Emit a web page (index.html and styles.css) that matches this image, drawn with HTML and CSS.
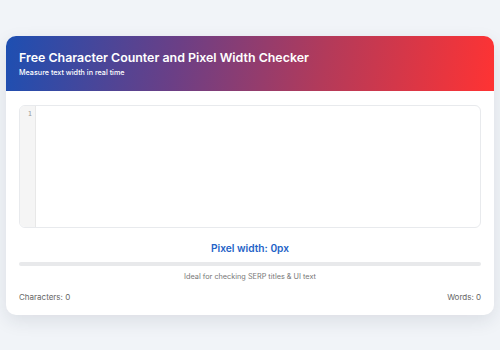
FILE: index.html
```html
<!DOCTYPE html>
<html>
<head>
<meta charset="utf-8">
<link rel="stylesheet" href="styles.css">
</head>
<body>
<div class="card">
  <div class="header">
    <h1 class="title">Free Character Counter and Pixel Width Checker</h1>
    <p class="subtitle">Measure text width in real time</p>
  </div>
  <div class="content">
    <div class="editor">
      <div class="gutter">1</div>
      <div class="textarea"></div>
    </div>
    <div class="pixel">Pixel width: 0px</div>
    <div class="bar"><div class="fill"></div></div>
    <div class="hint">Ideal for checking SERP titles &amp; UI text</div>
    <div class="stats">
      <span>Characters: 0</span>
      <span>Words: 0</span>
    </div>
  </div>
</div>
</body>
</html>
```

FILE: styles.css
```css
html, body {
  margin: 0;
  padding: 0;
}
body {
  background: #f1f4f8;
  font-family: Inter, "Noto Sans", sans-serif;
  padding: 36px 6px 0;
  height: 350px;
  box-sizing: border-box;
}
.card {
  background: #fff;
  border-radius: 10px;
  box-shadow: 0 6px 18px rgba(30, 40, 60, 0.10);
  overflow: hidden;
}
.header {
  height: 55px;
  box-sizing: border-box;
  padding: 13px 13px 0;
  background: linear-gradient(100deg, #1d4fb2 0%, #6b3f86 35%, #b33a5a 65%, #ff3333 100%);
  color: #fff;
}
.title {
  margin: 0;
  font-size: 12.4px;
  font-weight: 600;
  line-height: 17px;
}
.subtitle {
  margin: 2px 0 0;
  font-size: 7.2px;
  font-weight: 500;
  line-height: 10px;
}
.content {
  padding: 14px 13px 12px;
}
.editor {
  display: flex;
  height: 123px;
  border: 1px solid #e8eaed;
  border-radius: 6px;
  overflow: hidden;
  box-sizing: border-box;
}
.gutter {
  width: 16px;
  background: #f5f5f5;
  border-right: 1px solid #e8e8e8;
  font-family: "DejaVu Sans Mono", monospace;
  font-size: 7px;
  color: #999;
  text-align: right;
  padding: 4px 3px 0 0;
  box-sizing: border-box;
}
.textarea {
  flex: 1;
}
.pixel {
  margin-top: 13px;
  text-align: center;
  color: #2463c7;
  font-weight: 600;
  font-size: 10.2px;
  line-height: 14px;
}
.bar {
  margin-top: 7px;
  height: 4px;
  background: #e8e9eb;
  border-radius: 2px;
}
.fill {
  width: 0;
  height: 100%;
}
.hint {
  margin-top: 6px;
  text-align: center;
  font-size: 7.3px;
  color: #777;
  line-height: 10px;
}
.stats {
  display: flex;
  justify-content: space-between;
  margin-top: 10px;
  font-size: 8px;
  color: #666;
  line-height: 11px;
}
```
